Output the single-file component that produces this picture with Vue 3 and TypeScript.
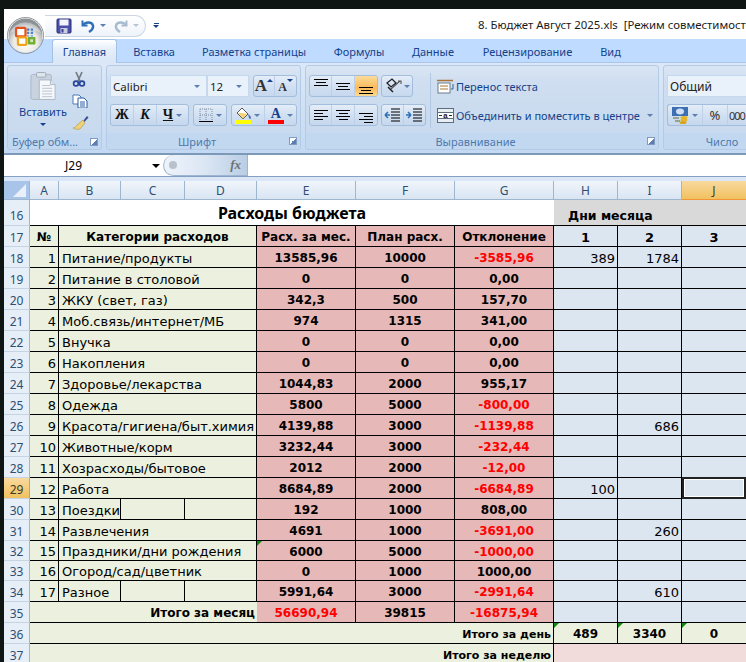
<script setup lang="ts">
interface Row { n: number; no: number; name: string; e: string; f: string; g: string; neg: boolean; h?: string; i?: string; split?: boolean; mark?: boolean }
const rows: Row[] = [
  { n: 18, no: 1, name: 'Питание/продукты', e: '13585,96', f: '10000', g: '-3585,96', neg: true, h: '389', i: '1784' },
  { n: 19, no: 2, name: 'Питание в столовой', e: '0', f: '0', g: '0,00', neg: false },
  { n: 20, no: 3, name: 'ЖКУ (свет, газ)', e: '342,3', f: '500', g: '157,70', neg: false },
  { n: 21, no: 4, name: 'Моб.связь/интернет/МБ', e: '974', f: '1315', g: '341,00', neg: false },
  { n: 22, no: 5, name: 'Внучка', e: '0', f: '0', g: '0,00', neg: false },
  { n: 23, no: 6, name: 'Накопления', e: '0', f: '0', g: '0,00', neg: false },
  { n: 24, no: 7, name: 'Здоровье/лекарства', e: '1044,83', f: '2000', g: '955,17', neg: false },
  { n: 25, no: 8, name: 'Одежда', e: '5800', f: '5000', g: '-800,00', neg: true },
  { n: 26, no: 9, name: 'Красота/гигиена/быт.химия', e: '4139,88', f: '3000', g: '-1139,88', neg: true, i: '686' },
  { n: 27, no: 10, name: 'Животные/корм', e: '3232,44', f: '3000', g: '-232,44', neg: true },
  { n: 28, no: 11, name: 'Хозрасходы/бытовое', e: '2012', f: '2000', g: '-12,00', neg: true },
  { n: 29, no: 12, name: 'Работа', e: '8684,89', f: '2000', g: '-6684,89', neg: true, h: '100' },
  { n: 30, no: 13, name: 'Поездки', e: '192', f: '1000', g: '808,00', neg: false, split: true },
  { n: 31, no: 14, name: 'Развлечения', e: '4691', f: '1000', g: '-3691,00', neg: true, i: '260' },
  { n: 32, no: 15, name: 'Праздники/дни рождения', e: '6000', f: '5000', g: '-1000,00', neg: true, mark: true },
  { n: 33, no: 16, name: 'Огород/сад/цветник', e: '0', f: '1000', g: '1000,00', neg: false },
  { n: 34, no: 17, name: 'Разное', e: '5991,64', f: '3000', g: '-2991,64', neg: true, i: '610', split: true },
]
const cols = ['A', 'B', 'C', 'D', 'E', 'F', 'G', 'H', 'I', 'J']
const tabs = [
  { label: 'Главная', w: 68 },
  { label: 'Вставка', w: 68 },
  { label: 'Разметка страницы', w: 132 },
  { label: 'Формулы', w: 78 },
  { label: 'Данные', w: 70 },
  { label: 'Рецензирование', w: 119 },
  { label: 'Вид', w: 47 },
]
const docTitle = '8. Бюджет Август 2025.xls\u00a0\u00a0[Режим совместимост'
</script>

<template>
  <div class="screen">
    <div class="window">
      <div class="orb">
        <svg width="35" height="35" viewBox="0 0 37 37">
          <defs>
            <radialGradient id="orbg" cx="50%" cy="72%" r="60%">
              <stop offset="0" stop-color="#ffffff" />
              <stop offset=".6" stop-color="#ece9e2" />
              <stop offset=".85" stop-color="#b9bdc0" />
              <stop offset="1" stop-color="#8d9296" />
            </radialGradient>
          </defs>
          <circle cx="18.500" cy="18.500" r="18" fill="url(#orbg)" />
          <path d="M2 16a17 15 0 0 1 33 0c-8-5-24-5-33 0z" fill="#fff" opacity=".35" />
          <rect x="8.500" y="10.500" width="10" height="9" rx="1" fill="#fff" stroke="#e4521f" stroke-width="2.400" />
          <g fill="#4a86cc">
            <rect x="20" y="11" width="2.500" height="2.500" /><rect x="24" y="11" width="2.500" height="2.500" />
            <rect x="20" y="14.500" width="2.500" height="2.500" /><rect x="24" y="14.500" width="2.500" height="2.500" />
            <rect x="20" y="18" width="2.500" height="2" fill="#8fb7e4" /><rect x="24" y="18" width="2.500" height="2" fill="#8fb7e4" />
          </g>
          <rect x="10.500" y="20.500" width="9" height="8" rx="1" fill="#fff" stroke="#f0a41c" stroke-width="2.400" />
          <rect x="21" y="20" width="8" height="8" rx="1" fill="#6fae35" />
          <rect x="23.500" y="22.500" width="3" height="3" fill="#d6e8b8" />
        </svg>
      </div>
      <div class="titlebar">
        <div class="qat">
          <svg width="16" height="16" viewBox="0 0 16 16">
            <rect x="1" y="1" width="14" height="14" rx="1" fill="#4a4fa8" stroke="#2b2f78" />
            <rect x="3.500" y="1.500" width="9" height="6" fill="#f2f4fb" />
            <rect x="4.500" y="10" width="7" height="5" fill="#c9cde0" />
            <rect x="5.500" y="11" width="2" height="3.500" fill="#3a3f90" />
          </svg>
          <svg class="undo" width="14" height="14" viewBox="0 0 14 14">
            <path d="M1.500 1.500v5h5" fill="none" stroke="#2f6fb8" stroke-width="2" />
            <path d="M2 6.500C4 2.500 11 2.500 12 6.500c.6 3-1.500 5-4 6.500" fill="none" stroke="#2f6fb8" stroke-width="2.400" />
          </svg>
          <i class="tri qtri"></i>
          <svg class="redo" width="14" height="14" viewBox="0 0 14 14">
            <path d="M12.500 1.500v5h-5" fill="none" stroke="#a8bccf" stroke-width="2" />
            <path d="M12 6.500C10 2.500 3 2.500 2 6.500c-.6 3 1.500 5 4 6.500" fill="none" stroke="#a8bccf" stroke-width="2.400" />
          </svg>
          <i class="tri qtri pale"></i>
        </div>
        <div class="custom"><b></b><i class="tri navy"></i></div>
        <div class="doc">{{ docTitle }}</div>
      </div>

      <div class="tabs">
        <div v-for="(t, i) in tabs" :key="t.label" class="tab" :class="{ active: i === 0 }" :style="{ width: t.w + 'px' }">{{ t.label }}</div>
      </div>

      <div class="ribbon">
        <section class="group g-clip">
          <div class="gbody clip">
            <div class="paste">
              <svg width="26" height="30" viewBox="0 0 28 31">
                <rect x="1" y="3" width="22" height="27" rx="2" fill="#c9d3df" stroke="#aab6c5" />
                <rect x="7" y="1" width="10" height="5" rx="1" fill="#dfe5ec" stroke="#9aa7b7" />
                <path d="M10 9h12l5 5v16H10z" fill="#f6f8fb" stroke="#aab6c5" />
                <path d="M22 9v5h5" fill="#dde4ec" stroke="#aab6c5" />
                <path d="M13 15h9M13 18h11M13 21h11M13 24h11M13 27h11" stroke="#b6c1ce" />
              </svg>
              <span class="paste-l">Вставить</span>
              <i class="tri navy"></i>
            </div>
            <div class="clip-icons">
              <svg width="14" height="16" viewBox="0 0 14 16">
                <path d="M4 1l4 9M10 1L6 10" stroke="#6f7780" stroke-width="1.600" />
                <circle cx="4" cy="12.500" r="2.400" fill="none" stroke="#27439a" stroke-width="1.700" />
                <circle cx="10" cy="12.500" r="2.400" fill="none" stroke="#27439a" stroke-width="1.700" />
              </svg>
              <svg width="16" height="14" viewBox="0 0 16 14">
                <path d="M1 1h6l2 2v7H1z" fill="#fff" stroke="#4a78b8" />
                <path d="M6 4h6l3 3v7H6z" fill="#fff" stroke="#2a5aa0" />
                <path d="M8 8h5M8 10h5M8 12h5" stroke="#2a5aa0" />
              </svg>
              <svg width="17" height="15" viewBox="0 0 17 15">
                <path d="M11 6l4-5 1.500 1.500L12.500 7z" fill="#3a4f90" />
                <path d="M11 5l2 3-5 6c-2 .6-5 .4-7-1 2-.5 3-1 4-3z" fill="#eed27a" stroke="#b79b4a" stroke-width=".7" />
              </svg>
            </div>
          </div>
          <div class="glabel"><span>Буфер обм...</span><i class="launch"></i></div>
        </section>

        <section class="group g-font">
          <div class="gbody stack">
            <div class="line">
              <div class="select fname"><span>Calibri</span><i class="tri"></i></div>
              <div class="select fsize"><span>12</span><i class="tri"></i></div>
              <div class="bgroup grow">
                <div class="b"><span class="bigA">A</span><i class="tri up"></i></div>
                <div class="b"><span class="smallA">A</span><i class="tri navy-s"></i></div>
              </div>
            </div>
            <div class="line">
              <div class="bgroup bik">
                <div class="b w-b"><b class="sty">Ж</b></div>
                <div class="b w-b"><b class="sty it">К</b></div>
                <div class="b w-u"><b class="sty un">Ч</b><i class="tri"></i></div>
              </div>
              <div class="bgroup bord">
                <div class="b w-bd">
                  <svg width="14" height="14" viewBox="0 0 14 14">
                    <path d="M1 1h12M1 7h12M1 1v12M7 1v12M13 1v12" stroke="#7f8da0" stroke-dasharray="1 1" fill="none" />
                    <path d="M0 13.500h14" stroke="#000" />
                  </svg>
                  <i class="tri"></i>
                </div>
              </div>
              <div class="bgroup fillc">
                <div class="b w-f">
                  <span class="fill-ic">
                    <svg width="17" height="13" viewBox="0 0 17 13">
                      <path d="M7 1l6 6-5 5-6-6z" fill="#fff" stroke="#555" />
                      <path d="M13 7c2 1 3 3 3 4s-2 1-2 0z" fill="#4a6fb0" />
                      <path d="M3 6l5 0 4 1-4 5z" fill="#f0c040" opacity=".7" />
                    </svg>
                    <u class="bar yellow"></u>
                  </span>
                  <i class="tri"></i>
                </div>
                <div class="b w-c">
                  <span class="fill-ic"><span class="colorA">A</span><u class="bar red"></u></span>
                  <i class="tri"></i>
                </div>
              </div>
            </div>
          </div>
          <div class="glabel center"><span>Шрифт</span><i class="launch"></i></div>
        </section>

        <section class="group g-align">
          <div class="gbody al">
            <div class="stack al-left">
              <div class="line l4">
                <div class="bgroup al3">
                  <div class="b a3"><span class="lines top"><u></u><u class="s"></u><u></u></span></div>
                  <div class="b a3"><span class="lines"><u></u><u class="s"></u><u></u></span></div>
                  <div class="b a3 on"><span class="lines bot"><u></u><u class="s"></u><u></u></span></div>
                </div>
                <div class="bgroup orient">
                  <div class="b w-o">
                    <svg width="18" height="16" viewBox="0 0 18 16">
                      <path d="M2 5l5-4 4 4-5 4z" fill="none" stroke="#222" stroke-width="1.300" />
                      <path d="M6 11l9-8M13 3h3v3" fill="none" stroke="#555" stroke-width="1.100" />
                      <path d="M3 9l5 5" stroke="#222" stroke-width="1.500" />
                    </svg>
                    <i class="tri"></i>
                  </div>
                </div>
              </div>
              <div class="line l4">
                <div class="bgroup al3">
                  <div class="b a3"><span class="lines left"><u></u><u class="m"></u><u></u><u class="m"></u></span></div>
                  <div class="b a3"><span class="lines ctr"><u></u><u class="m"></u><u></u><u class="m"></u></span></div>
                  <div class="b a3"><span class="lines right"><u></u><u class="m"></u><u></u><u class="m"></u></span></div>
                </div>
                <div class="bgroup indent">
                  <div class="b w-i">
                    <svg width="16" height="16" viewBox="0 0 16 16">
                      <path d="M7 2h9M7 5h9M7 8h9M7 11h9M7 14h9" stroke="#000" stroke-width="1.200" />
                      <path d="M6 8H1M1 8l3-3M1 8l3 3" stroke="#2f6fb8" stroke-width="1.500" fill="none" />
                    </svg>
                  </div>
                  <div class="b w-i">
                    <svg width="16" height="16" viewBox="0 0 16 16">
                      <path d="M7 2h9M7 5h9M7 8h9M7 11h9M7 14h9" stroke="#000" stroke-width="1.200" />
                      <path d="M0 8h5M5 8L2 5M5 8l-3 3" stroke="#2f6fb8" stroke-width="1.500" fill="none" />
                    </svg>
                  </div>
                </div>
              </div>
            </div>
            <div class="vsep"></div>
            <div class="stack al-right">
              <div class="wide">
                <svg width="17" height="15" viewBox="0 0 17 15">
                  <path d="M0 1.500h16" stroke="#a9743a" stroke-width="1.500" />
                  <rect x="1" y="4" width="12" height="10" fill="#fff" stroke="#6b7a8c" />
                  <path d="M3 7h8M3 10h8" stroke="#a9743a" />
                  <path d="M16 5v5h-2" stroke="#3a5f96" fill="none" />
                </svg>
                <span>Перенос текста</span>
              </div>
              <div class="wide">
                <svg width="17" height="15" viewBox="0 0 17 15">
                  <rect x=".5" y=".5" width="16" height="14" fill="#e8edf3" stroke="#5d6d80" />
                  <rect x=".5" y="4.500" width="16" height="6" fill="#fff" stroke="#5d6d80" />
                  <path d="M2 7.500h3M15 7.500h-3" stroke="#2b2b2b" />
                  <text x="8.500" y="10" font-size="8" font-family="Liberation Mono" font-weight="700" text-anchor="middle" fill="#222">a</text>
                </svg>
                <span>Объединить и поместить в центре</span>
                <i class="tri m"></i>
              </div>
            </div>
          </div>
          <div class="glabel center al-l"><span>Выравнивание</span><i class="launch"></i></div>
        </section>

        <section class="group g-num">
          <div class="gbody stack">
            <div class="line"><div class="select numsel"><span>Общий</span></div></div>
            <div class="line">
              <div class="bgroup numb">
                <div class="b w-cur">
                  <svg width="17" height="17" viewBox="0 0 17 17">
                    <rect x="0" y="0" width="16" height="9" fill="#3f6fb3" />
                    <ellipse cx="8" cy="4.500" rx="4" ry="3" fill="#cfe0f5" />
                    <path d="M1 11h6M3 14h5" stroke="#5a6a30" />
                    <ellipse cx="12" cy="10.500" rx="3.500" ry="1.500" fill="#e6b422" />
                    <ellipse cx="12" cy="13" rx="3.500" ry="1.500" fill="#e6b422" />
                    <ellipse cx="11" cy="15.500" rx="3.500" ry="1.500" fill="#d9a316" />
                  </svg>
                  <i class="tri"></i>
                </div>
                <div class="b w-pc">%</div>
                <div class="b w-k">000</div>
              </div>
            </div>
          </div>
          <div class="glabel center num-l"><span>Число</span></div>
        </section>
      </div>

      <div class="formula">
        <div class="namebox"><span>J29</span><i class="tri black"></i></div>
        <div class="fxwrap"><i class="dot"></i><span class="fx">fx</span></div>
        <div class="finput"></div>
      </div>

      <div class="gap"></div>

      <div class="sheet">
        <div class="ch corner"><i></i></div>
        <div v-for="c in cols" :key="c" class="ch" :class="{ hot: c === 'J' }">{{ c }}</div>

        <div class="rh r16">16</div>
        <div class="title s7">Расходы бюджета</div>
        <div class="days s3"><span>Дни месяца</span></div>

        <div class="rh">17</div>
        <div class="c green bold mid">№</div>
        <div class="c green bold mid s3">Категории расходов</div>
        <div class="c pink bold mid">Расх. за мес.</div>
        <div class="c pink bold mid">План расх.</div>
        <div class="c pink bold mid">Отклонение</div>
        <div class="c blue bold mid big">1</div>
        <div class="c blue bold mid big">2</div>
        <div class="c blue bold mid big">3</div>

        <template v-for="r in rows" :key="r.n">
          <div class="rh" :class="{ hot: r.n === 29 }">{{ r.n }}</div>
          <div class="c green right">{{ r.no }}</div>
          <template v-if="r.split">
            <div class="c green name">{{ r.name }}</div>
            <div class="c green"></div>
            <div class="c green"></div>
          </template>
          <div v-else class="c green name s3">{{ r.name }}</div>
          <div class="c pink bold mid" :class="{ mark: r.mark }">{{ r.e }}</div>
          <div class="c pink bold mid">{{ r.f }}</div>
          <div class="c pink bold mid" :class="{ red: r.neg }">{{ r.g }}</div>
          <div class="c blue right">{{ r.h }}</div>
          <div class="c blue right">{{ r.i }}</div>
          <div class="c blue" :class="{ sel: r.n === 29 }"></div>
        </template>

        <div class="rh">35</div>
        <div class="c green bold right s4 nob">Итого за месяц</div>
        <div class="c pink bold mid red">56690,94</div>
        <div class="c pink bold mid">39815</div>
        <div class="c pink bold mid red">-16875,94</div>
        <div class="c blue"></div>
        <div class="c blue"></div>
        <div class="c blue"></div>

        <div class="rh">36</div>
        <div class="c green bold small right s7">Итого за день</div>
        <div class="c green bold mid mark">489</div>
        <div class="c green bold mid mark">3340</div>
        <div class="c green bold mid mark">0</div>

        <div class="rh">37</div>
        <div class="c green bold small right s7">Итого за неделю</div>
        <div class="c rose s3"></div>
      </div>
    </div>
  </div>
</template>

<style>
html, body { margin: 0; background: #0f1512; }
</style>

<style scoped>
.screen {
  width: 746px;
  height: 662px;
  overflow: hidden;
  position: relative;
  background: #0f1512;
  padding: 9px 0 0 4px;
  box-sizing: border-box;
  font-family: "Noto Sans", "Liberation Sans", sans-serif;
}
.window { width: 742px; background: #cfe0f4; position: relative; }

.orb {
  position: absolute;
  left: 3px;
  top: 8px;
  width: 37px;
  height: 37px;
  z-index: 3;
  border-radius: 50%;
  border: 1px solid #8f9498;
  box-sizing: border-box;
  overflow: hidden;
}
.orb svg { display: block; }
.titlebar {
  height: 30px;
  background: #fff;
  display: flex;
  align-items: center;
}
.qat {
  margin: 3px 0 0 41px;
  width: 101px;
  height: 22px;
  box-sizing: border-box;
  border: 1px solid #cdd7e3;
  border-left: 0;
  border-radius: 0 12px 12px 0;
  background: linear-gradient(#fff, #eef3fa);
  display: flex;
  align-items: center;
  padding-left: 11px;
}
.undo { margin-left: 9px; }
.redo { margin-left: 8px; }
.qtri { margin-left: 5px; }
.custom { margin: 3px 0 0 7px; display: flex; flex-direction: column; align-items: center; gap: 1px; }
.custom b { display: block; width: 5px; height: 1px; background: #15428b; }
.doc {
  margin: 2px 0 0 auto;
  width: 268px;
  white-space: nowrap;
  overflow: hidden;
  font-size: 11.400px;
  line-height: 16px;
  color: #1b1b1b;
}
.tri {
  display: inline-block;
  width: 0; height: 0;
  border-left: 3px solid transparent;
  border-right: 3px solid transparent;
  border-top: 3px solid #5b7fb0;
  flex: none;
}
.tri.pale { border-top-color: #b6c3d2; }
.tri.navy { border-top-color: #15428b; }
.tri.black { border-left-width: 4px; border-right-width: 4px; border-top: 4px solid #000; }
.tri.m { margin-left: 5px; }

.tabs {
  height: 23px;
  padding-left: 48px;
  display: flex;
  background: #bfdbff;
}
.tab {
  font-size: 11px;
  line-height: 26px;
  text-align: center;
  color: #15428b;
  white-space: nowrap;
  flex: none;
  box-sizing: border-box;
}
.tab.active {
  width: 65px !important;
  margin-right: 3px;
  background: linear-gradient(#fff, #e6eefa 40%, #d8e6f6);
  border: 1px solid #a5c2e4;
  border-bottom: 0;
  border-radius: 3px 3px 0 0;
  line-height: 24px;
  height: 24px;
  position: relative;
  z-index: 1;
}

.ribbon {
  height: 93px;
  box-sizing: border-box;
  padding: 2px 0 5px 3px;
  display: flex;
  gap: 4px;
  background: linear-gradient(#dce8f7, #c3d9f3);
  border-bottom: 2px solid #7d99b8;
  border-top: 1px solid #a9c6ea;
  overflow: hidden;
}
.group {
  flex: none;
  box-sizing: border-box;
  height: 85px;
  border: 1px solid #b4cbe6;
  border-radius: 3px;
  display: flex;
  flex-direction: column;
  background: linear-gradient(#dbe6f4 0, #cfdef0 18%, #c7d9ee 100%);
}
.g-clip { width: 95px; }
.g-font { width: 195px; }
.g-align { width: 354px; }
.g-num { width: 100px; }
.gbody { flex: 1; min-height: 0; }
.glabel {
  height: 16px;
  flex: none;
  box-sizing: border-box;
  background: #c1d8f0;
  color: #4f78ae;
  font-size: 11px;
  line-height: 16px;
  display: flex;
  align-items: center;
  justify-content: space-between;
  padding: 1px 3px 0 4px;
  border-radius: 0 0 3px 3px;
}
.glabel.center { justify-content: center; position: relative; padding-right: 17px; }
.glabel.center .launch { position: absolute; right: 3px; top: 4px; }
.num-l.center { padding: 1px 0 0 18px; }
.launch {
  display: block;
  width: 8px; height: 8px;
  border: 1px solid #7f9cc0;
  box-sizing: border-box;
  background: linear-gradient(135deg, #fff 50%, #5a7fb0 50%);
}
.clip { display: flex; }
.paste {
  width: 70px;
  flex: none;
  display: flex;
  flex-direction: column;
  align-items: center;
  padding-top: 5px;
}
.paste-l { font-size: 11px; line-height: 15px; color: #15428b; margin-top: 3px; }
.paste .tri { margin-top: 4px; }
.clip-icons {
  display: flex;
  flex-direction: column;
  gap: 7px;
  padding-top: 5px;
  align-items: flex-start;
  margin-left: -6px;
}
.stack { display: flex; flex-direction: column; gap: 7px; padding: 9px 0 0 3px; }
.line { display: flex; gap: 4px; height: 22px; }
.select {
  height: 22px;
  box-sizing: border-box;
  background: #e9f1fb;
  border: 1px solid #c6d8ee;
  display: flex;
  align-items: center;
  justify-content: space-between;
  padding: 0 6px 0 2px;
  font-size: 11.500px;
  color: #222;
}
.fname { width: 97px; }
.fsize { width: 42px; margin-left: -4px; }
.bgroup {
  display: flex;
  height: 22px;
  box-sizing: border-box;
  border: 1px solid #a3bddc;
  border-radius: 3px;
  background: linear-gradient(#e4edf8, #d2e0f2 50%, #c6d8ee);
  overflow: hidden;
}
.b {
  display: flex;
  align-items: center;
  justify-content: center;
  gap: 3px;
  height: 100%;
  box-sizing: border-box;
  border-right: 1px solid #bdd0e7;
  font-size: 13px;
  color: #222;
}
.b:last-child { border-right: 0; }
.grow { width: 44px; }
.grow .b { width: 22px; align-items: flex-start; gap: 0; }
.bigA { font: 700 17px/20px "Liberation Serif", serif; color: #333; }
.smallA { font: 700 12px/23px "Liberation Serif", serif; color: #333; }
.up { border-top: 0; border-bottom: 3px solid #15428b; margin-top: 3px; }
.navy-s { border-top-color: #15428b; margin-top: 3px; }
.bik { width: 79px; }
.w-b { width: 23px; }
.w-u { width: 31px; }
.sty { font: 700 14px/16px "Liberation Serif", serif; color: #111; }
.it { font-style: italic; }
.un { text-decoration: underline; }
.bord { width: 34px; }
.w-bd { width: 32px; }
.fillc { width: 66px; }
.w-f { width: 33px; }
.w-c { width: 32px; }
.fill-ic { display: flex; flex-direction: column; align-items: center; width: 16px; }
.bar { display: block; width: 16px; height: 4px; }
.bar.yellow { background: #ffff00; }
.bar.red { background: #ff0000; }
.colorA { font: 700 14px/13px "Liberation Serif", serif; color: #15428b; }
.al { display: flex; }
.al-left { width: 120px; flex: none; }
.l4 { gap: 3px; }
.al3 { width: 69px; }
.a3 { width: 23px; }
.a3.on { background: linear-gradient(#fbdc9b, #fbb957 60%, #fddc8d); }
.lines { display: flex; flex-direction: column; gap: 2px; width: 14px; height: 16px; justify-content: center; }
.lines u { display: block; height: 1px; background: #000; width: 14px; }
.lines .s { width: 10px; margin-left: 2px; }
.lines.top { justify-content: flex-start; padding-top: 1px; }
.lines.bot { justify-content: flex-end; }
.lines .m { width: 9px; }
.lines.ctr .m { margin-left: 2.500px; }
.lines.right .m { margin-left: 5px; }
.orient { width: 32px; }
.w-o { width: 30px; gap: 1px; }
.indent { width: 45px; }
.w-i { width: 22px; }
.vsep { width: 1px; height: 55px; background: #b0c8e4; margin: 7px 6px 0 1px; flex: none; }
.al-right { padding: 9px 0 0 0; }
.wide {
  height: 22px;
  display: flex;
  align-items: center;
  gap: 2px;
  font-size: 11px;
  color: #15428b;
  white-space: nowrap;
}
.numsel { width: 90px; font-size: 12px; padding-left: 2px; }
.numb { width: 90px; border-right: 0; border-radius: 3px 0 0 3px; }
.w-cur { width: 35px; }
.w-pc { width: 25px; font-size: 13px; color: #333; }
.w-k { width: 28px; font-size: 11px; letter-spacing: -1px; color: #333; justify-content: flex-start; padding-left: 1px; }

.formula {
  height: 22px;
  box-sizing: border-box;
  display: flex;
  background: #fff;
  border-bottom: 1px solid #84a1c2;
}
.namebox {
  width: 159px;
  flex: none;
  display: flex;
  align-items: center;
  font-size: 12px;
  color: #000;
  padding-left: 61px;
  box-sizing: border-box;
}
.namebox .tri { margin-left: auto; margin-right: 3px; }
.fxwrap {
  width: 85px;
  flex: none;
  box-sizing: border-box;
  border-radius: 11px 0 0 11px;
  border: 1px solid #9fb6d0;
  border-top: 0;
  background: linear-gradient(90deg, #eef3fa, #dbe6f4 50%, #b9cde4);
  display: flex;
  align-items: center;
  justify-content: space-between;
  padding: 0 6px 0 5px;
}
.dot { display: block; width: 8px; height: 8px; border-radius: 50%; background: #b9c1cc; }
.fx { font: italic 700 13px/16px "Liberation Serif", serif; color: #6b7178; }
.finput { flex: 1; }
.gap { height: 4px; background: #dbe7f6; }

.sheet {
  display: grid;
  grid-template-columns: 26px 29px 62px 64px 72px 99px 99px 99px 64px 64px 65px;
  grid-template-rows: 19px 26px repeat(15, 21px) 20px 20px 21px 21px 21px 21px;
  background: #fff;
  font-family: "DejaVu Sans", sans-serif;
  font-size: 13px;
  color: #000;
}
.ch {
  box-sizing: border-box;
  background: linear-gradient(#f0f5fb, #d9e5f3);
  border-right: 1px solid #9eb6ce;
  border-bottom: 1px solid #9eb6ce;
  display: flex;
  align-items: center;
  justify-content: center;
  font-family: "Noto Sans", sans-serif;
  font-size: 12px;
  color: #2f4f72;
}
.ch.hot { background: linear-gradient(#f9d99f, #f1c15f); border-color: #f29536; color: #3b3b2a; }
.corner { background: #a9c4e9; position: relative; overflow: hidden; }
.corner i {
  position: absolute;
  right: 3px; bottom: 2px;
  width: 0; height: 0;
  border-left: 13px solid transparent;
  border-bottom: 13px solid #e9f0f9;
}
.rh {
  box-sizing: border-box;
  background: #e6eef8;
  border-right: 1px solid #9eb6ce;
  border-bottom: 1px solid #c5d3e3;
  display: flex;
  align-items: center;
  justify-content: center;
  padding-top: 2px;
  font-family: "Noto Sans", sans-serif;
  font-size: 12px;
  color: #2f4f72;
}
.rh.r16 { padding-top: 5px; }
.rh.hot { background: linear-gradient(#f9d99f, #f1c15f); border-right-color: #f29536; color: #3b3b2a; }
.title {
  grid-column: span 7;
  border-bottom: 1px solid #000;
  display: flex;
  align-items: center;
  justify-content: center;
  font-family: "Noto Sans", sans-serif;
  font-weight: 700;
  font-size: 16px;
}
.days {
  grid-column: span 3;
  background: #d9d9d9;
  border-bottom: 1px solid #000;
  display: flex;
  align-items: center;
  padding: 5px 0 0 14px;
  box-sizing: border-box;
  font-weight: 700;
  font-size: 12.500px;
}
.c {
  box-sizing: border-box;
  border-right: 1px solid #000;
  border-bottom: 1px solid #000;
  display: flex;
  align-items: center;
  white-space: nowrap;
  min-width: 0;
  padding: 2px 2px 0;
  position: relative;
}
.s3 { grid-column: span 3; }
.s4 { grid-column: span 4; }
.s7 { grid-column: span 7; }
.green { background: #ebf1de; }
.pink { background: #e6b8b7; }
.blue { background: #dce6f1; }
.rose { background: #f2dcdb; }
.bold { font-weight: 700; font-size: 12px; }
.small { font-size: 11px; }
.mid { justify-content: center; }
.right { justify-content: flex-end; }
.name { padding-left: 3px; }
.red { color: #ff0000; }
.big { font-size: 13px; }
.nob { border-right: 0; }
.mark::before {
  content: "";
  position: absolute;
  left: 0; top: 0;
  width: 0; height: 0;
  border-top: 5px solid #128a12;
  border-right: 5px solid transparent;
}
.sel::after {
  content: "";
  position: absolute;
  left: 0; top: -1px; right: 0; bottom: -1px;
  border: 2px solid #222;
  box-shadow: inset 0 0 0 1px #fff;
}
</style>
